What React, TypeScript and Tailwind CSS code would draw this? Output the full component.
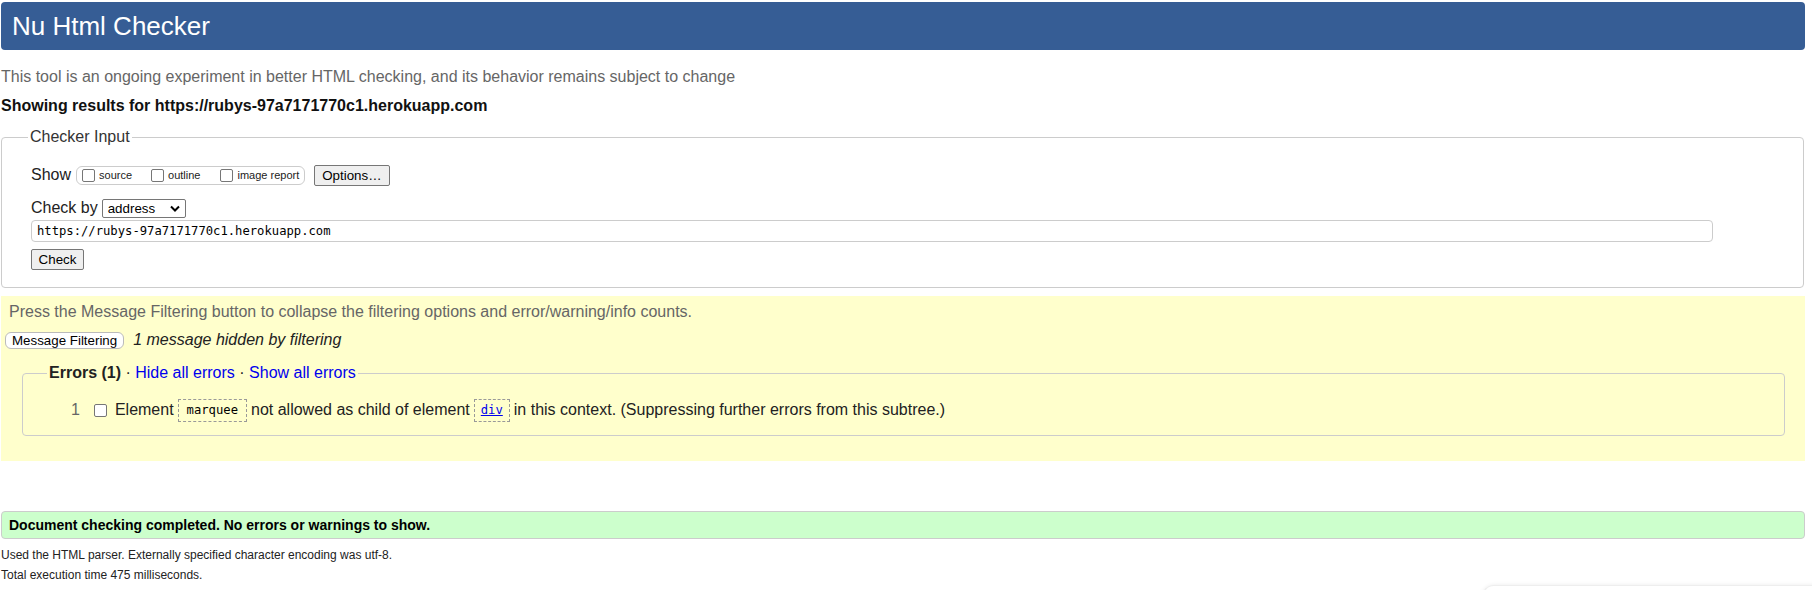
import React from "react";

function Box({ label }: { label: string }) {
  return (
    <span className="flex items-center gap-[4px]">
      <span className="inline-block w-[13px] h-[13px] border border-[#767676] rounded-[2px] bg-white" />
      <span className="text-[11px] leading-[14px] text-[#222]">{label}</span>
    </span>
  );
}

export default function App() {
  return (
    <div className="relative w-[1812px] h-[590px] overflow-hidden bg-white font-['Liberation_Sans',Arial,sans-serif] text-[#222]">
      <div className="pt-[2px] pl-[1px] w-[1805px]">
        {/* Header */}
        <div className="h-[48px] bg-[#365d95] rounded-[4px] flex items-center pl-[11px]">
          <h1 className="text-[26px] leading-[30px] text-white font-normal">Nu Html Checker</h1>
        </div>

        <p className="mt-[17px] text-[16px] leading-[20px] text-[#666]">
          This tool is an ongoing experiment in better HTML checking, and its behavior remains subject to change
        </p>
        <p className="mt-[9px] text-[16px] leading-[20px] font-bold text-[#111]">
          Showing results for https://rubys-97a7171770c1.herokuapp.com
        </p>

        {/* Checker Input */}
        <fieldset className="mt-[11px] border border-[#ccc] rounded-[4px] w-[1803px]">
          <legend className="ml-[26px] px-[2px] text-[16px] leading-[20px] text-[#333]">Checker Input</legend>
          <div className="pl-[29px] pt-[17px] pb-[16px]">
            <div className="h-[22px] flex items-center">
              <span className="text-[16px] leading-[20px] text-[#222]">Show</span>
              <div className="ml-[5px] h-[19px] flex items-center border border-[#ccc] rounded-[6px] pl-[5px] pr-[5px]">
                <Box label="source" />
                <span className="w-[19px]" />
                <Box label="outline" />
                <span className="w-[20px]" />
                <Box label="image report" />
              </div>
              <button className="ml-[9px] h-[21px] px-[7px] bg-[#efefef] border border-[#767676] rounded-[2px] text-[13.33px] leading-[15px] text-black">
                Options…
              </button>
            </div>
            <div className="mt-[11px] h-[22px] flex items-center">
              <span className="text-[16px] leading-[20px] text-[#222]">Check by</span>
              <div className="ml-[4px] w-[84px] h-[19px] border border-[#767676] rounded-[2px] bg-white flex items-center justify-between pl-[5px] pr-[5px]">
                <span className="text-[13.33px] leading-[15px] text-black">address</span>
                <svg width="10" height="7" viewBox="0 0 10 7" className="mt-[1px]">
                  <path d="M1 1.5 L5 5.5 L9 1.5" fill="none" stroke="#000" strokeWidth="2" />
                </svg>
              </div>
            </div>
            <div className="mt-[1px] w-[1682px] h-[22px] border border-[#ccc] rounded-[4px] flex items-center pl-[5px]">
              <span className="font-['DejaVu_Sans_Mono',monospace] text-[12.2px] leading-[14px] text-black">
                https://rubys-97a7171770c1.herokuapp.com
              </span>
            </div>
            <button className="mt-[7px] h-[21px] w-[53px] bg-[#efefef] border border-[#767676] rounded-[2px] text-[13.33px] leading-[15px] text-black">
              Check
            </button>
          </div>
        </fieldset>

        {/* Messages area */}
        <div className="mt-[8px] h-[165px] bg-[#ffffcc] pt-[6px]">
          <p className="pl-[8px] text-[16px] leading-[20px] text-[#666]">
            Press the Message Filtering button to collapse the filtering options and error/warning/info counts.
          </p>
          <div className="mt-[8px] h-[20px] flex items-center pl-[4px]">
            <button className="h-[17px] px-[6px] bg-white border border-[#bbb] rounded-[6px] text-[13.33px] leading-[15px] text-black">
              Message Filtering
            </button>
            <span className="ml-[9px] italic text-[16px] leading-[20px] text-[#222]">1 message hidden by filtering</span>
          </div>
          <fieldset className="mt-[13px] ml-[21px] w-[1763px] border border-[#ccc] rounded-[4px]">
            <legend className="ml-[24px] px-[2px] text-[16px] leading-[20px]">
              <span className="font-bold text-[#222]">Errors (1)</span>
              <span className="text-[#222]"> · </span>
              <span className="text-[#0000ee]">Hide all errors</span>
              <span className="text-[#222]"> · </span>
              <span className="text-[#0000ee]">Show all errors</span>
            </legend>
            <div className="pt-[16px] pb-[14px] pl-[48px] h-[22px] box-content flex items-center text-[16px] leading-[20px]">
              <span className="text-[#666]">1</span>
              <span className="ml-[14px] inline-block w-[13px] h-[13px] border border-[#767676] rounded-[2px] bg-white" />
              <span className="ml-[8px] text-[#222]">Element</span>
              <span className="ml-[4px] inline-block border border-dashed border-[#999] px-[8px] leading-[21px] font-['DejaVu_Sans_Mono',monospace] text-[12.2px] text-black">
                marquee
              </span>
              <span className="ml-[4px] text-[#222]">not allowed as child of element</span>
              <span className="ml-[4px] inline-block border border-dashed border-[#999] px-[6px] leading-[21px] font-['DejaVu_Sans_Mono',monospace] text-[12.2px] text-[#0000ee] underline">
                div
              </span>
              <span className="ml-[4px] text-[#222]">in this context. (Suppressing further errors from this subtree.)</span>
            </div>
          </fieldset>
        </div>

        {/* Success */}
        <div className="mt-[50px] h-[28px] bg-[#ccffcc] border border-[#ccc] rounded-[4px] flex items-center pl-[7px]">
          <span className="font-bold text-[14px] leading-[16px] text-black">
            Document checking completed. No errors or warnings to show.
          </span>
        </div>
        <p className="mt-[8px] text-[12px] leading-[16px] text-[#222]">
          Used the HTML parser. Externally specified character encoding was utf-8.
        </p>
        <p className="mt-[4px] text-[12px] leading-[16px] text-[#222]">Total execution time 475 milliseconds.</p>
      </div>

      <div className="absolute left-[1482px] top-[585px] w-[340px] h-[30px] bg-white rounded-tl-[12px] border-t border-l border-[#eee] shadow-[0_0_4px_rgba(0,0,0,0.08)]" />
    </div>
  );
}
